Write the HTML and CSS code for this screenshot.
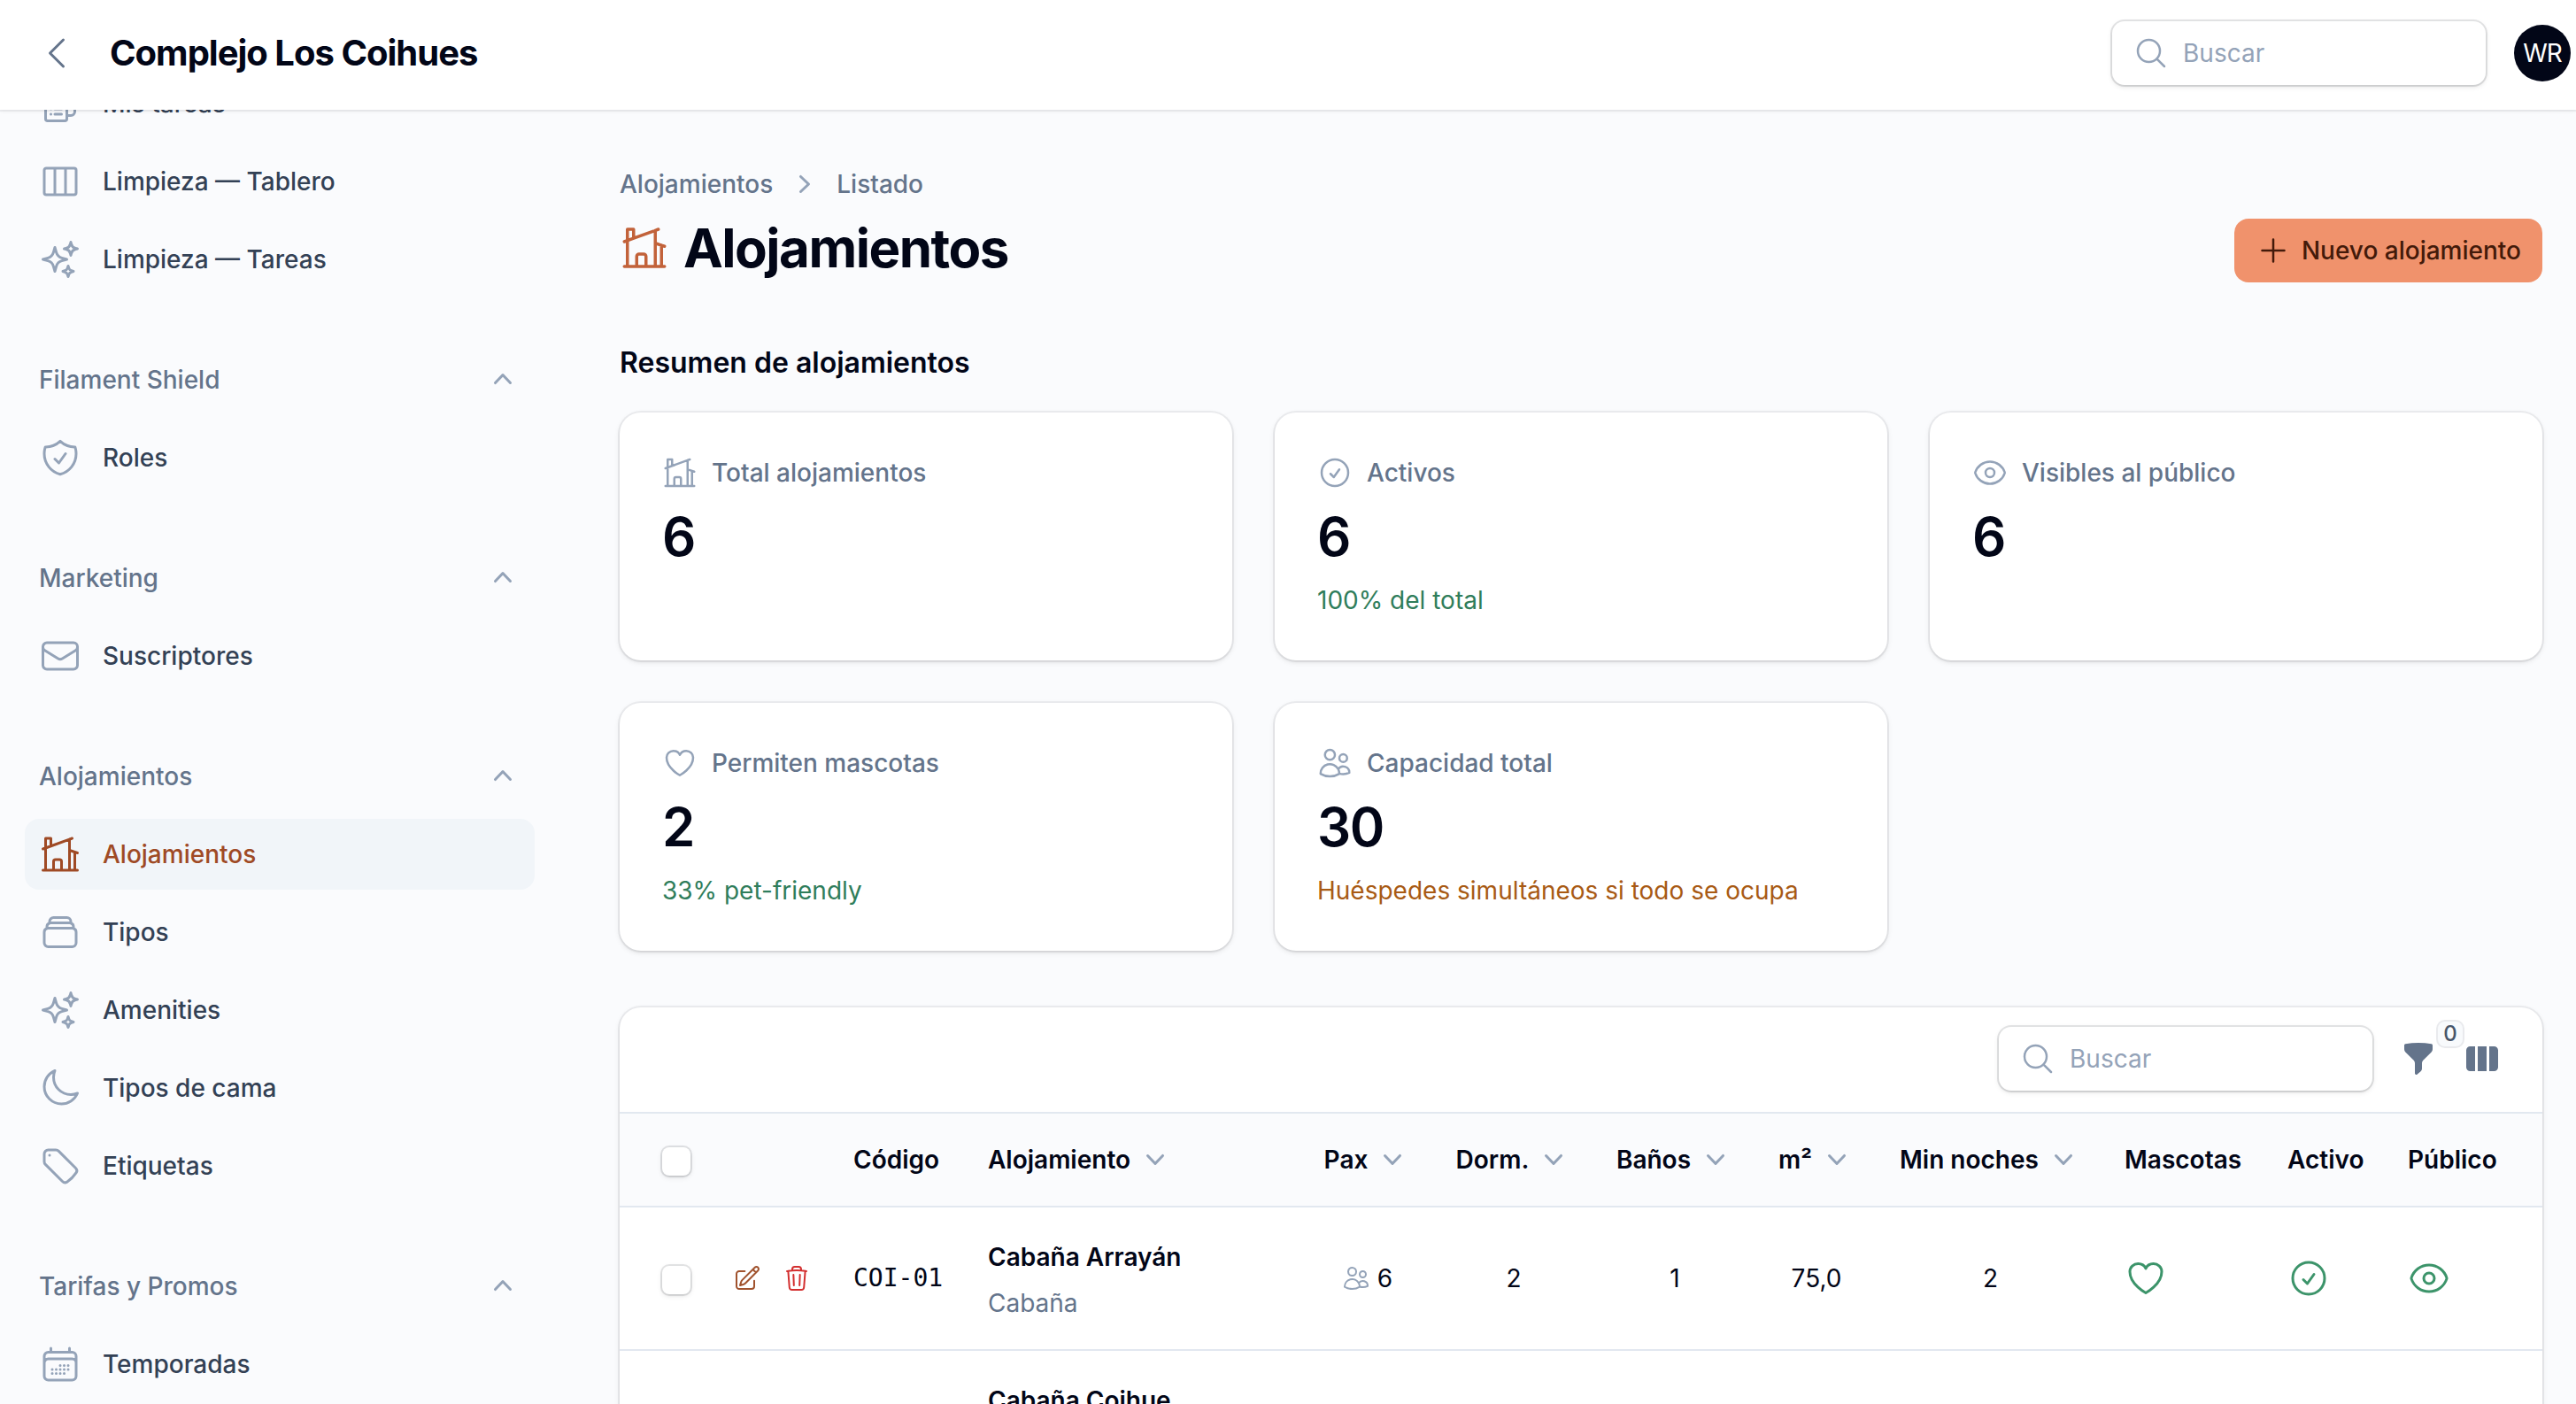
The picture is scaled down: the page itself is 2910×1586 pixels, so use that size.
FILE: index.html
```
<!DOCTYPE html>
<html lang="es">
<head>
  <meta charset="UTF-8">
  <meta name="viewport" content="width=device-width, initial-scale=1">
  <title>Alojamientos - Complejo Los Coihues</title>
  <link rel="stylesheet" href="styles.css">
</head>
<body>

  <!-- Iconos -->
  <svg class="sprite" aria-hidden="true">
    <symbol id="i-back" viewBox="0 0 24 24"><path d="M15.75 19.5 8.25 12l7.5-7.5"/></symbol>
    <symbol id="i-search" viewBox="0 0 24 24"><path d="m21 21-5.197-5.197m0 0A7.5 7.5 0 1 0 5.196 5.196a7.5 7.5 0 0 0 10.607 10.607Z"/></symbol>
    <symbol id="i-plus" viewBox="0 0 24 24"><path d="M12 4.5v15m7.5-7.5h-15"/></symbol>
    <symbol id="i-clipboard" viewBox="0 0 24 24"><path d="M9 12h3.75M9 15h3.75M9 18h3.75m3 .75H18a2.25 2.25 0 0 0 2.25-2.25V6.108c0-1.135-.845-2.098-1.976-2.192a48.424 48.424 0 0 0-1.123-.08m-5.801 0c-.065.21-.1.433-.1.664 0 .414.336.75.75.75h4.5a.75.75 0 0 0 .75-.75 2.25 2.25 0 0 0-.1-.664m-5.8 0A2.251 2.251 0 0 1 13.5 2.25H15c1.012 0 1.867.668 2.15 1.586m-5.8 0c-.376.023-.75.05-1.124.08C9.095 4.01 8.25 4.973 8.25 6.108V8.25m0 0H4.875c-.621 0-1.125.504-1.125 1.125v11.25c0 .621.504 1.125 1.125 1.125h9.75c.621 0 1.125-.504 1.125-1.125V9.375c0-.621-.504-1.125-1.125-1.125H8.25ZM6.75 12h.008v.008H6.75V12Zm0 3h.008v.008H6.75V15Zm0 3h.008v.008H6.75V18Z"/></symbol>
    <symbol id="i-columns" viewBox="0 0 24 24"><path d="M9 4.5v15m6-15v15m-10.875 0h15.75c.621 0 1.125-.504 1.125-1.125V5.625c0-.621-.504-1.125-1.125-1.125H4.125C3.504 4.5 3 5.004 3 5.625v12.75c0 .621.504 1.125 1.125 1.125Z"/></symbol>
    <symbol id="i-sparkles" viewBox="0 0 24 24"><path d="M9.813 15.904 9 18.75l-.813-2.846a4.5 4.5 0 0 0-3.09-3.09L2.25 12l2.846-.813a4.5 4.5 0 0 0 3.09-3.09L9 5.25l.813 2.846a4.5 4.5 0 0 0 3.09 3.09L15.75 12l-2.846.813a4.5 4.5 0 0 0-3.09 3.09ZM18.259 8.715 18 9.75l-.259-1.035a3.375 3.375 0 0 0-2.455-2.456L14.25 6l1.036-.259a3.375 3.375 0 0 0 2.455-2.456L18 2.25l.259 1.035a3.375 3.375 0 0 0 2.456 2.456L21.75 6l-1.035.259a3.375 3.375 0 0 0-2.456 2.456ZM16.894 20.567 16.5 21.75l-.394-1.183a2.25 2.25 0 0 0-1.423-1.423L13.5 18.75l1.183-.394a2.25 2.25 0 0 0 1.423-1.423l.394-1.183.394 1.183a2.25 2.25 0 0 0 1.423 1.423l1.183.394-1.183.394a2.25 2.25 0 0 0-1.423 1.423Z"/></symbol>
    <symbol id="i-shield" viewBox="0 0 24 24"><path d="M9 12.75 11.25 15 15 9.75m-3-7.036A11.959 11.959 0 0 1 3.598 6 11.99 11.99 0 0 0 3 9.749c0 5.592 3.824 10.29 9 11.623 5.176-1.332 9-6.03 9-11.622 0-1.31-.21-2.571-.598-3.751h-.152c-3.196 0-6.1-1.248-8.25-3.285Z"/></symbol>
    <symbol id="i-envelope" viewBox="0 0 24 24"><path d="M21.75 6.75v10.5a2.25 2.25 0 0 1-2.25 2.25h-15a2.25 2.25 0 0 1-2.25-2.25V6.75m19.5 0A2.25 2.25 0 0 0 19.5 4.5h-15a2.25 2.25 0 0 0-2.25 2.25m19.5 0v.243a2.25 2.25 0 0 1-1.07 1.916l-7.5 4.615a2.25 2.25 0 0 1-2.36 0L3.32 8.91a2.25 2.25 0 0 1-1.07-1.916V6.75"/></symbol>
    <symbol id="i-home" viewBox="0 0 24 24"><path d="M8.25 21v-4.875c0-.621.504-1.125 1.125-1.125h2.25c.621 0 1.125.504 1.125 1.125V21m0 0h4.5V3.545M12.75 21h7.5V10.75M2.25 21h1.5m18 0h-18M2.25 9l4.5-1.636M18.75 3l-1.5.545m0 6.205 3 1m1.5.5-1.5-.5M6.75 7.364V3h-3v18m3-13.636 10.5-3.819"/></symbol>
    <symbol id="i-stack" viewBox="0 0 24 24"><path d="M6 6.878V6a2.25 2.25 0 0 1 2.25-2.25h7.5A2.25 2.25 0 0 1 18 6v.878m-12 0c.235-.083.487-.128.75-.128h10.5c.263 0 .515.045.75.128m-12 0A2.25 2.25 0 0 0 4.5 9v.878m13.5-3A2.25 2.25 0 0 1 19.5 9v.878m0 0a2.246 2.246 0 0 0-.75-.128H5.25c-.263 0-.515.045-.75.128m15 0A2.25 2.25 0 0 1 21 12v6a2.25 2.25 0 0 1-2.25 2.25H5.25A2.25 2.25 0 0 1 3 18v-6c0-.98.626-1.813 1.5-2.122"/></symbol>
    <symbol id="i-moon" viewBox="0 0 24 24"><path d="M21.752 15.002A9.72 9.72 0 0 1 18 15.75c-5.385 0-9.75-4.365-9.75-9.75 0-1.33.266-2.597.748-3.752A9.753 9.753 0 0 0 3 11.25C3 16.635 7.365 21 12.75 21a9.753 9.753 0 0 0 9.002-5.998Z"/></symbol>
    <symbol id="i-tag" viewBox="0 0 24 24"><path d="M9.568 3H5.25A2.25 2.25 0 0 0 3 5.25v4.318c0 .597.237 1.17.659 1.591l9.581 9.581c.699.699 1.78.872 2.607.33a18.095 18.095 0 0 0 5.223-5.223c.542-.827.369-1.908-.33-2.607L11.16 3.66A2.25 2.25 0 0 0 9.568 3Z"/><path d="M6 6h.008v.008H6V6Z"/></symbol>
    <symbol id="i-calendar" viewBox="0 0 24 24"><path d="M6.75 3v2.25M17.25 3v2.25M3 18.75V7.5a2.25 2.25 0 0 1 2.25-2.25h13.5A2.25 2.25 0 0 1 21 7.5v11.25m-18 0A2.25 2.25 0 0 0 5.25 21h13.5A2.25 2.25 0 0 0 21 18.75m-18 0v-7.5A2.25 2.25 0 0 1 5.25 9h13.5A2.25 2.25 0 0 1 21 11.25v7.5m-9-6h.008v.008H12v-.008ZM12 15h.008v.008H12V15Zm0 2.25h.008v.008H12v-.008ZM9.75 15h.008v.008H9.75V15Zm0 2.25h.008v.008H9.75v-.008ZM7.5 15h.008v.008H7.5V15Zm0 2.25h.008v.008H7.5v-.008Zm6.75-4.5h.008v.008h-.008v-.008Zm0 2.25h.008v.008h-.008V15Zm0 2.25h.008v.008h-.008v-.008Zm2.25-4.5h.008v.008H16.5v-.008Zm0 2.25h.008v.008H16.5V15Z"/></symbol>
    <symbol id="i-check" viewBox="0 0 24 24"><path d="M9 12.75 11.25 15 15 9.75M21 12a9 9 0 1 1-18 0 9 9 0 0 1 18 0Z"/></symbol>
    <symbol id="i-eye" viewBox="0 0 24 24"><path d="M2.036 12.322a1.012 1.012 0 0 1 0-.639C3.423 7.51 7.36 4.5 12 4.5c4.638 0 8.573 3.007 9.963 7.178.07.207.07.431 0 .639C20.577 16.49 16.64 19.5 12 19.5c-4.638 0-8.573-3.007-9.963-7.178Z"/><circle cx="12" cy="12" r="3"/></symbol>
    <symbol id="i-heart" viewBox="0 0 24 24"><path d="M21 8.25c0-2.485-2.099-4.5-4.688-4.5-1.935 0-3.597 1.126-4.312 2.733-.715-1.607-2.377-2.733-4.313-2.733C5.1 3.75 3 5.765 3 8.25c0 7.22 9 12 9 12s9-4.78 9-12Z"/></symbol>
    <symbol id="i-users" viewBox="0 0 24 24"><path d="M15 19.128a9.38 9.38 0 0 0 2.625.372 9.337 9.337 0 0 0 4.121-.952 4.125 4.125 0 0 0-7.533-2.493M15 19.128v-.003c0-1.113-.285-2.16-.786-3.07M15 19.128v.106A12.318 12.318 0 0 1 8.624 21c-2.331 0-4.512-.645-6.374-1.766l-.001-.109a6.375 6.375 0 0 1 11.964-3.07M12 6.375a3.375 3.375 0 1 1-6.75 0 3.375 3.375 0 0 1 6.75 0Zm8.25 2.25a2.625 2.625 0 1 1-5.25 0 2.625 2.625 0 0 1 5.25 0Z"/></symbol>
    <symbol id="i-edit" viewBox="0 0 24 24"><path d="m16.862 4.487 1.687-1.688a1.875 1.875 0 1 1 2.652 2.652L10.582 16.07a4.5 4.5 0 0 1-1.897 1.13L6 18l.8-2.685a4.5 4.5 0 0 1 1.13-1.897l8.932-8.931Zm0 0L19.5 7.125M18 14v4.75A2.25 2.25 0 0 1 15.75 21H5.25A2.25 2.25 0 0 1 3 18.75V8.25A2.25 2.25 0 0 1 5.25 6H10"/></symbol>
    <symbol id="i-trash" viewBox="0 0 24 24"><path d="m14.74 9-.346 9m-4.788 0L9.26 9m9.968-3.21c.342.052.682.107 1.022.166m-1.022-.165L18.16 19.673a2.25 2.25 0 0 1-2.244 2.077H8.084a2.25 2.25 0 0 1-2.244-2.077L4.772 5.79m14.456 0a48.108 48.108 0 0 0-3.478-.397m-12 .562c.34-.059.68-.114 1.022-.165m0 0a48.11 48.11 0 0 1 3.478-.397m7.5 0v-.916c0-1.18-.91-2.164-2.09-2.201a51.964 51.964 0 0 0-3.32 0c-1.18.037-2.09 1.022-2.09 2.201v.916m7.5 0a48.667 48.667 0 0 0-7.5 0"/></symbol>
    <symbol id="i-up" viewBox="0 0 20 20"><path d="M14.77 12.79a.75.75 0 0 1-1.06-.02L10 8.832 6.29 12.77a.75.75 0 1 1-1.08-1.04l4.25-4.5a.75.75 0 0 1 1.08 0l4.25 4.5a.75.75 0 0 1-.02 1.06Z"/></symbol>
    <symbol id="i-down" viewBox="0 0 20 20"><path d="M5.23 7.21a.75.75 0 0 1 1.06.02L10 11.168l3.71-3.938a.75.75 0 1 1 1.08 1.04l-4.25 4.5a.75.75 0 0 1-1.08 0l-4.25-4.5a.75.75 0 0 1 .02-1.06Z"/></symbol>
    <symbol id="i-right" viewBox="0 0 20 20"><path d="M7.21 14.77a.75.75 0 0 1 .02-1.06L11.168 10 7.23 6.29a.75.75 0 1 1 1.04-1.08l4.5 4.25a.75.75 0 0 1 0 1.08l-4.5 4.25a.75.75 0 0 1-1.06-.02Z"/></symbol>
    <symbol id="i-funnel" viewBox="0 0 20 20"><path d="M2.628 1.601C5.028 1.206 7.49 1 10 1s4.973.206 7.372.601a.75.75 0 0 1 .628.74v2.288a2.25 2.25 0 0 1-.659 1.59l-4.682 4.683a2.25 2.25 0 0 0-.659 1.59v3.037c0 .684-.31 1.33-.844 1.757l-1.937 1.55A.75.75 0 0 1 8 18.25v-5.757a2.25 2.25 0 0 0-.659-1.591L2.659 6.22A2.25 2.25 0 0 1 2 4.629V2.34a.75.75 0 0 1 .628-.74Z"/></symbol>
    <symbol id="i-cols" viewBox="0 0 20 20"><path d="M14 17h2.75A2.25 2.25 0 0 0 19 14.75v-9.5A2.25 2.25 0 0 0 16.75 3H14v14ZM12.5 3h-5v14h5V3ZM3.25 3H6v14H3.25A2.25 2.25 0 0 1 1 14.75v-9.5A2.25 2.25 0 0 1 3.25 3Z"/></symbol>
  </svg>

  <header class="topbar">
    <svg class="icon icon-lg back"><use href="#i-back"/></svg>
    <div class="brand">Complejo Los Coihues</div>
    <div class="search">
      <svg class="icon"><use href="#i-search"/></svg>
      <span>Buscar</span>
    </div>
    <div class="avatar">WR</div>
  </header>

  <div class="layout">

    <aside class="sidebar">
      <nav class="nav">
        <ul class="group">
          <li class="item"><svg class="icon icon-lg"><use href="#i-clipboard"/></svg>Mis tareas</li>
          <li class="item"><svg class="icon icon-lg"><use href="#i-columns"/></svg>Limpieza — Tablero</li>
          <li class="item"><svg class="icon icon-lg"><use href="#i-sparkles"/></svg>Limpieza — Tareas</li>
        </ul>
        <ul class="group">
          <li class="group-title">Filament Shield<svg class="icon solid"><use href="#i-up"/></svg></li>
          <li class="item"><svg class="icon icon-lg"><use href="#i-shield"/></svg>Roles</li>
        </ul>
        <ul class="group">
          <li class="group-title">Marketing<svg class="icon solid"><use href="#i-up"/></svg></li>
          <li class="item"><svg class="icon icon-lg"><use href="#i-envelope"/></svg>Suscriptores</li>
        </ul>
        <ul class="group">
          <li class="group-title">Alojamientos<svg class="icon solid"><use href="#i-up"/></svg></li>
          <li class="item active"><svg class="icon icon-lg"><use href="#i-home"/></svg>Alojamientos</li>
          <li class="item"><svg class="icon icon-lg"><use href="#i-stack"/></svg>Tipos</li>
          <li class="item"><svg class="icon icon-lg"><use href="#i-sparkles"/></svg>Amenities</li>
          <li class="item"><svg class="icon icon-lg"><use href="#i-moon"/></svg>Tipos de cama</li>
          <li class="item"><svg class="icon icon-lg"><use href="#i-tag"/></svg>Etiquetas</li>
        </ul>
        <ul class="group">
          <li class="group-title">Tarifas y Promos<svg class="icon solid"><use href="#i-up"/></svg></li>
          <li class="item"><svg class="icon icon-lg"><use href="#i-calendar"/></svg>Temporadas</li>
        </ul>
      </nav>
    </aside>

    <main class="main">
      <div class="page-header">
        <div>
          <div class="breadcrumbs">
            <span>Alojamientos</span>
            <svg class="icon solid"><use href="#i-right"/></svg>
            <span>Listado</span>
          </div>
          <h1><svg class="icon"><use href="#i-home"/></svg>Alojamientos</h1>
        </div>
        <button type="button" class="btn"><svg class="icon"><use href="#i-plus"/></svg>Nuevo alojamiento</button>
      </div>

      <h2>Resumen de alojamientos</h2>

      <section class="stats">
        <div class="stat">
          <div class="stat-label"><svg class="icon"><use href="#i-home"/></svg>Total alojamientos</div>
          <div class="stat-value">6</div>
        </div>
        <div class="stat">
          <div class="stat-label"><svg class="icon"><use href="#i-check"/></svg>Activos</div>
          <div class="stat-value">6</div>
          <div class="stat-desc success">100% del total</div>
        </div>
        <div class="stat">
          <div class="stat-label"><svg class="icon"><use href="#i-eye"/></svg>Visibles al público</div>
          <div class="stat-value">6</div>
        </div>
        <div class="stat">
          <div class="stat-label"><svg class="icon"><use href="#i-heart"/></svg>Permiten mascotas</div>
          <div class="stat-value">2</div>
          <div class="stat-desc success">33% pet-friendly</div>
        </div>
        <div class="stat">
          <div class="stat-label"><svg class="icon"><use href="#i-users"/></svg>Capacidad total</div>
          <div class="stat-value">30</div>
          <div class="stat-desc warning">Huéspedes simultáneos si todo se ocupa</div>
        </div>
      </section>

      <section class="table-card">
        <div class="toolbar">
          <div class="search">
            <svg class="icon"><use href="#i-search"/></svg>
            <span>Buscar</span>
          </div>
          <div class="filter">
            <svg class="icon solid"><use href="#i-funnel"/></svg>
            <span class="badge">0</span>
          </div>
          <svg class="icon solid"><use href="#i-cols"/></svg>
        </div>

        <table>
          <colgroup>
            <col class="c-check"><col class="c-actions"><col class="c-code"><col class="c-name"><col class="c-pax"><col class="c-dorm"><col class="c-banos"><col class="c-m2"><col class="c-min"><col class="c-pets"><col class="c-active"><col>
          </colgroup>
          <thead>
            <tr>
              <th class="first"><span class="checkbox"></span></th>
              <th></th>
              <th>Código</th>
              <th><span class="sort">Alojamiento<svg class="icon solid"><use href="#i-down"/></svg></span></th>
              <th class="center"><span class="sort">Pax<svg class="icon solid"><use href="#i-down"/></svg></span></th>
              <th class="center"><span class="sort">Dorm.<svg class="icon solid"><use href="#i-down"/></svg></span></th>
              <th class="center"><span class="sort">Baños<svg class="icon solid"><use href="#i-down"/></svg></span></th>
              <th class="center"><span class="sort">m²<svg class="icon solid"><use href="#i-down"/></svg></span></th>
              <th class="center"><span class="sort">Min noches<svg class="icon solid"><use href="#i-down"/></svg></span></th>
              <th>Mascotas</th>
              <th>Activo</th>
              <th>Público</th>
            </tr>
          </thead>
          <tbody>
            <tr>
              <td class="first"><span class="checkbox"></span></td>
              <td><div class="actions"><svg class="icon icon-sm edit"><use href="#i-edit"/></svg><svg class="icon icon-sm trash"><use href="#i-trash"/></svg></div></td>
              <td class="code">COI-01</td>
              <td><div class="name">Cabaña Arrayán</div><div class="kind">Cabaña</div></td>
              <td class="center"><span class="pax"><svg class="icon icon-sm"><use href="#i-users"/></svg>6</span></td>
              <td class="center">2</td>
              <td class="center">1</td>
              <td class="center">75,0</td>
              <td class="center">2</td>
              <td><svg class="icon icon-lg yes"><use href="#i-heart"/></svg></td>
              <td><svg class="icon icon-lg yes"><use href="#i-check"/></svg></td>
              <td><svg class="icon icon-lg yes"><use href="#i-eye"/></svg></td>
            </tr>
            <tr>
              <td></td>
              <td></td>
              <td></td>
              <td><div class="name">Cabaña Coihue</div><div class="kind">Cabaña</div></td>
              <td colspan="8"></td>
            </tr>
          </tbody>
        </table>
      </section>
    </main>

  </div>

</body>
</html>
```
FILE: styles.css
```
* {
  box-sizing: border-box;
}
body {
  margin: 0;
  height: 100vh;
  overflow: hidden;
  display: flex;
  flex-direction: column;
  font-family: Inter, "Liberation Sans", sans-serif;
  font-size: 28px;
  line-height: 40px;
  color: #020617;
  background: #fafbfd;
}
ul, h1, h2 {
  margin: 0;
  padding: 0;
  list-style: none;
}

/* Iconos */
.sprite {
  display: none;
}
.icon {
  width: 40px;
  height: 40px;
  flex: none;
  display: block;
  fill: none;
  stroke: currentColor;
  stroke-width: 1.5;
  stroke-linecap: round;
  stroke-linejoin: round;
  color: #94a3b8;
}
.icon-sm {
  width: 32px;
  height: 32px;
}
.icon-lg {
  width: 48px;
  height: 48px;
}
.solid {
  fill: currentColor;
  stroke: none;
}

/* Barra superior */
.topbar {
  position: relative;
  z-index: 2;
  flex: none;
  display: flex;
  align-items: center;
  height: 124px;
  padding: 0 6px 4px 40px;
  background: #fff;
  box-shadow: 0 0 0 2px rgba(2, 6, 23, .05), 0 2px 4px rgba(0, 0, 0, .05);
}
.back {
  color: #64748b;
}
.brand {
  margin-left: 36px;
  font-size: 40px;
  font-weight: 700;
  letter-spacing: -0.025em;
}
.search {
  display: flex;
  align-items: center;
  gap: 16px;
  width: 422px;
  height: 72px;
  padding: 0 24px;
  border-radius: 14px;
  background: #fff;
  color: #94a3b8;
  box-shadow: 0 0 0 2px rgba(2, 6, 23, .1), 0 2px 6px rgba(0, 0, 0, .1), 0 2px 4px -2px rgba(0, 0, 0, .1);
}
.topbar .search {
  margin-left: auto;
}
.avatar {
  width: 64px;
  height: 64px;
  margin-left: 32px;
  border-radius: 50%;
  background: #020617;
  color: #fff;
  font-size: 28px;
  letter-spacing: -0.04em;
  line-height: 64px;
  text-align: center;
}

.layout {
  flex: 1;
  min-height: 0;
  display: flex;
}

/* Menu lateral */
.sidebar {
  width: 632px;
  flex: none;
  padding: 0 28px;
}
.nav {
  display: flex;
  flex-direction: column;
  gap: 56px;
  margin-top: -47px;
}
.group {
  display: flex;
  flex-direction: column;
  gap: 8px;
}
.item, .group-title {
  display: flex;
  align-items: center;
  height: 80px;
  padding: 0 16px;
  border-radius: 16px;
  font-weight: 500;
}
.item {
  gap: 24px;
  color: #334155;
}
.group-title {
  justify-content: space-between;
  color: #64748b;
}
.group-title .icon {
  margin-bottom: 2px;
}
.active {
  background: #f1f5f9;
}
.active, .active .icon {
  color: #9f4a25;
}

/* Contenido */
.main {
  flex: 1;
  min-width: 0;
  padding: 64px 38px 0 68px;
}
.page-header {
  display: flex;
  justify-content: space-between;
  align-items: flex-end;
  height: 128px;
}
.breadcrumbs {
  display: flex;
  align-items: center;
  gap: 16px;
  font-weight: 500;
  color: #64748b;
}
h1 {
  display: flex;
  align-items: center;
  gap: 16px;
  margin-top: 16px;
  font-size: 60px;
  line-height: 72px;
  font-weight: 700;
  letter-spacing: -0.025em;
}
h1 .icon {
  width: 56px;
  height: 56px;
  color: #c2623a;
}
.btn {
  display: flex;
  align-items: center;
  gap: 12px;
  height: 72px;
  margin-bottom: -3px;
  padding: 0 24px;
  border: none;
  border-radius: 16px;
  background: #f0926c;
  color: #431a0a;
  font: inherit;
  font-weight: 500;
}
.btn .icon {
  color: inherit;
}
h2 {
  margin: 70px 0 32px;
  font-size: 32px;
  line-height: 48px;
  font-weight: 600;
}

.stats {
  display: grid;
  grid-template-columns: repeat(3, 1fr);
  gap: 48px;
}
.stat, .table-card {
  background: #fff;
  border-radius: 24px;
  box-shadow: 0 0 0 2px rgba(2, 6, 23, .05), 0 2px 6px rgba(0, 0, 0, .1), 0 2px 4px -2px rgba(0, 0, 0, .1);
}
.stat {
  display: flex;
  flex-direction: column;
  gap: 16px;
  height: 280px;
  padding: 48px;
}
.stat-label {
  display: flex;
  align-items: center;
  gap: 16px;
  font-weight: 500;
  color: #64748b;
}
.stat-value {
  font-size: 60px;
  line-height: 72px;
  font-weight: 600;
  letter-spacing: -0.025em;
}
.success {
  color: #2f7d5b;
}
.warning {
  color: #a85a14;
}

/* Tabla */
.table-card {
  margin-top: 64px;
  height: 600px;
  overflow: hidden;
}
.toolbar {
  display: flex;
  align-items: center;
  justify-content: flex-end;
  gap: 32px;
  height: 118px;
  padding: 0 48px 2px;
}
.toolbar > .icon, .filter .icon {
  color: #64748b;
}
.filter {
  position: relative;
}
.badge {
  position: absolute;
  top: -22px;
  left: 42px;
  width: 28px;
  height: 28px;
  border-radius: 8px;
  background: #f8fafc;
  box-shadow: 0 0 0 2px rgba(71, 85, 105, .12);
  color: #475569;
  font-size: 24px;
  line-height: 28px;
  font-weight: 500;
  text-align: center;
}
table {
  width: 100%;
  table-layout: fixed;
  border-collapse: separate;
  border-spacing: 0;
}
.c-check { width: 104px; }
.c-actions { width: 136px; }
.c-code { width: 152px; }
.c-name { width: 378px; }
.c-pax { width: 149px; }
.c-dorm { width: 182px; }
.c-banos { width: 182px; }
.c-m2 { width: 138px; }
.c-min { width: 255px; }
.c-pets { width: 184px; }
.c-active { width: 136px; }
th, td {
  padding: 0 24px;
  border-top: 2px solid #e2e8f0;
  text-align: left;
  white-space: nowrap;
}
th {
  height: 106px;
  background: #fafbfd;
  font-weight: 600;
}
td {
  height: 162px;
}
.first {
  padding-left: 48px;
  padding-right: 0;
}
.center {
  text-align: center;
}
.sort {
  display: inline-flex;
  align-items: center;
  gap: 8px;
  vertical-align: top;
}
.checkbox {
  display: block;
  width: 32px;
  height: 32px;
  margin-top: 4px;
  border-radius: 8px;
  background: #fff;
  box-shadow: 0 0 0 2px rgba(2, 6, 23, .1), 0 2px 6px rgba(0, 0, 0, .1), 0 2px 4px -2px rgba(0, 0, 0, .1);
}
.actions {
  display: flex;
  gap: 24px;
}
.edit {
  color: #a0522d;
}
.trash {
  color: #d32f2f;
}
.code {
  font-family: "DejaVu Sans Mono", monospace;
}
.name {
  margin-top: 4px;
  font-weight: 600;
}
.kind {
  margin-top: 12px;
  color: #64748b;
}
.pax {
  display: inline-flex;
  align-items: center;
  gap: 8px;
  vertical-align: top;
}
.yes {
  color: #3c946a;
}
```
